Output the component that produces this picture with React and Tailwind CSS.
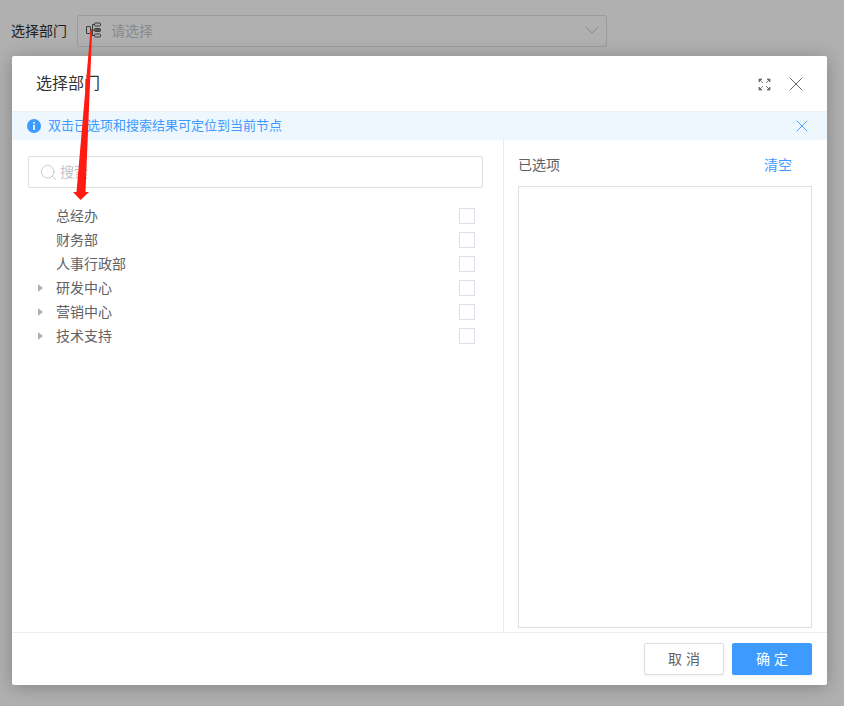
import React from 'react';
import { Search, X, ChevronDown } from 'lucide-react';

const font = { cjk: 'font-["Liberation_Sans","Noto_Sans_CJK_SC",sans-serif]' };

const departments = [
  { name: '总经办', children: false },
  { name: '财务部', children: false },
  { name: '人事行政部', children: false },
  { name: '研发中心', children: true },
  { name: '营销中心', children: true },
  { name: '技术支持', children: true },
];

const OrgIcon = () => (
  <svg width="16" height="16" viewBox="0 0 16 16" fill="none" stroke="#3a3a3a" strokeWidth="1" className="-mt-[2px] shrink-0">
    <rect x="0.5" y="4.5" width="4" height="7" rx="0.5" />
    <rect x="8.5" y="1" width="6" height="3" rx="1" />
    <rect x="8.5" y="6.5" width="6" height="3" rx="1" fill="#555" />
    <rect x="8.5" y="12" width="6" height="3" rx="1" />
    <path d="M4.5 8h4M6.5 2.5h2M6.5 13.5h2M6.5 2.5v11" />
  </svg>
);

const ExpandIcon = () => (
  <svg width="13" height="13" viewBox="0 0 13 13" fill="#6a6a6a" stroke="#6a6a6a" strokeWidth="0.8">
    <path d="M1 1h3L1 4zM12 1H9l3 3zM1 12h3L1 9zM12 12H9l3-3z" />
    <path fill="none" d="M2 2l3 3M11 2L8 5M2 11l3-3M11 11L8 8" />
  </svg>
);

const InfoIcon = () => (
  <svg width="14" height="14" viewBox="0 0 14 14">
    <circle cx="7" cy="7" r="7" fill="#3d9bff" />
    <rect x="6.2" y="3" width="1.6" height="1.6" fill="#fff" />
    <rect x="6.2" y="5.8" width="1.6" height="5.2" fill="#fff" />
  </svg>
);

const TreeRow = ({ item }) => (
  <div className="flex h-6 items-center pr-2">
    <div className="flex w-7 shrink-0 justify-center pr-1">
      {item.children && (
        <span className="h-0 w-0 border-y-[4px] border-l-[5px] border-y-transparent border-l-[#b0b0b0]"></span>
      )}
    </div>
    <span className="flex-1 text-sm text-[#606266]">{item.name}</span>
    <span className="h-4 w-4 border border-[#dcdfe6] bg-white"></span>
  </div>
);

const App = () => {
  return (
    <div className={`relative h-[706px] w-[844px] overflow-hidden bg-[#b0b0b0] ${font.cjk}`}>
      <div className="flex items-center pl-[11px] pt-[15px]">
        <span className="w-[66px] text-sm text-[#1f1f1f]">选择部门</span>
        <div className="flex h-8 w-[530px] items-center rounded-[2px] border border-[#9c9c9c] pl-2 pr-[2px]">
          <OrgIcon />
          <span className="ml-[9px] flex-1 text-sm text-[#8a8a8a]">请选择</span>
          <ChevronDown size={24} strokeWidth={1} className="-mt-[2px] text-[#8a8a8a]" />
        </div>
      </div>

      <div className="absolute left-3 top-14 flex h-[629px] w-[815px] flex-col rounded-[2px] bg-white shadow-[0_2px_18px_rgba(0,0,0,0.25)]">
        <div className="flex h-[56px] items-center border-b border-[#f0f0f0] pl-6 pr-[19px] pt-[1px]">
          <h2 className="flex-1 text-[16px] text-[#303133]">选择部门</h2>
          <ExpandIcon />
          <X size={24} strokeWidth={1} className="ml-[13px] text-[#666]" />
        </div>

        <div className="flex h-[28px] items-center bg-[#eef6fe] pl-[15px] pr-[15px]">
          <InfoIcon />
          <span className="ml-[7px] flex-1 text-[13px] text-[#3d9bff]">双击已选项和搜索结果可定位到当前节点</span>
          <X size={20} strokeWidth={1.1} className="text-[#3d9bff]" />
        </div>

        <div className="flex min-h-0 flex-1 border-b border-[#ececec]">
          <div className="w-[492px] border-r border-[#ececec] pl-4 pr-5 pt-4">
            <div className="flex h-8 items-center rounded-[2px] border border-[#dcdfe6] pl-[10px]">
              <Search size={19} strokeWidth={1.1} className="text-[#c0c4cc]" />
              <span className="ml-[2px] text-sm text-[#c0c4cc]">搜索</span>
            </div>
            <div className="mt-4">
              {departments.map((item) => (
                <TreeRow key={item.name} item={item} />
              ))}
            </div>
          </div>

          <div className="flex flex-1 flex-col pb-1 pl-[14px] pr-[15px] pt-[15px]">
            <div className="flex h-5 items-center justify-between pr-5">
              <span className="text-sm text-[#606266]">已选项</span>
              <span className="text-sm text-[#3d9bff]">清空</span>
            </div>
            <div className="mt-[11px] flex-1 border border-[#dcdfe6]"></div>
          </div>
        </div>

        <div className="flex h-[52px] items-center justify-end gap-2 pr-[15px]">
          <button className="h-8 w-20 rounded-[2px] border border-[#dcdfe6] bg-white pl-1 text-sm tracking-[4px] text-[#606266] shadow-[0_1px_3px_rgba(0,0,0,0.06)]">
            取消
          </button>
          <button className="h-8 w-20 rounded-[2px] bg-[#3d9bff] pl-1 text-sm tracking-[4px] text-white shadow-[0_1px_3px_rgba(0,0,0,0.08)]">
            确定
          </button>
        </div>
      </div>

      <svg className="absolute left-0 top-0" width="844" height="706" viewBox="0 0 844 706" fill="none">
        <polygon points="90.5,30 92.2,30 85.5,192 89,192 80.5,200 73,192 76.5,192" fill="#ff1a12" />
      </svg>
    </div>
  );
};

export default App;
